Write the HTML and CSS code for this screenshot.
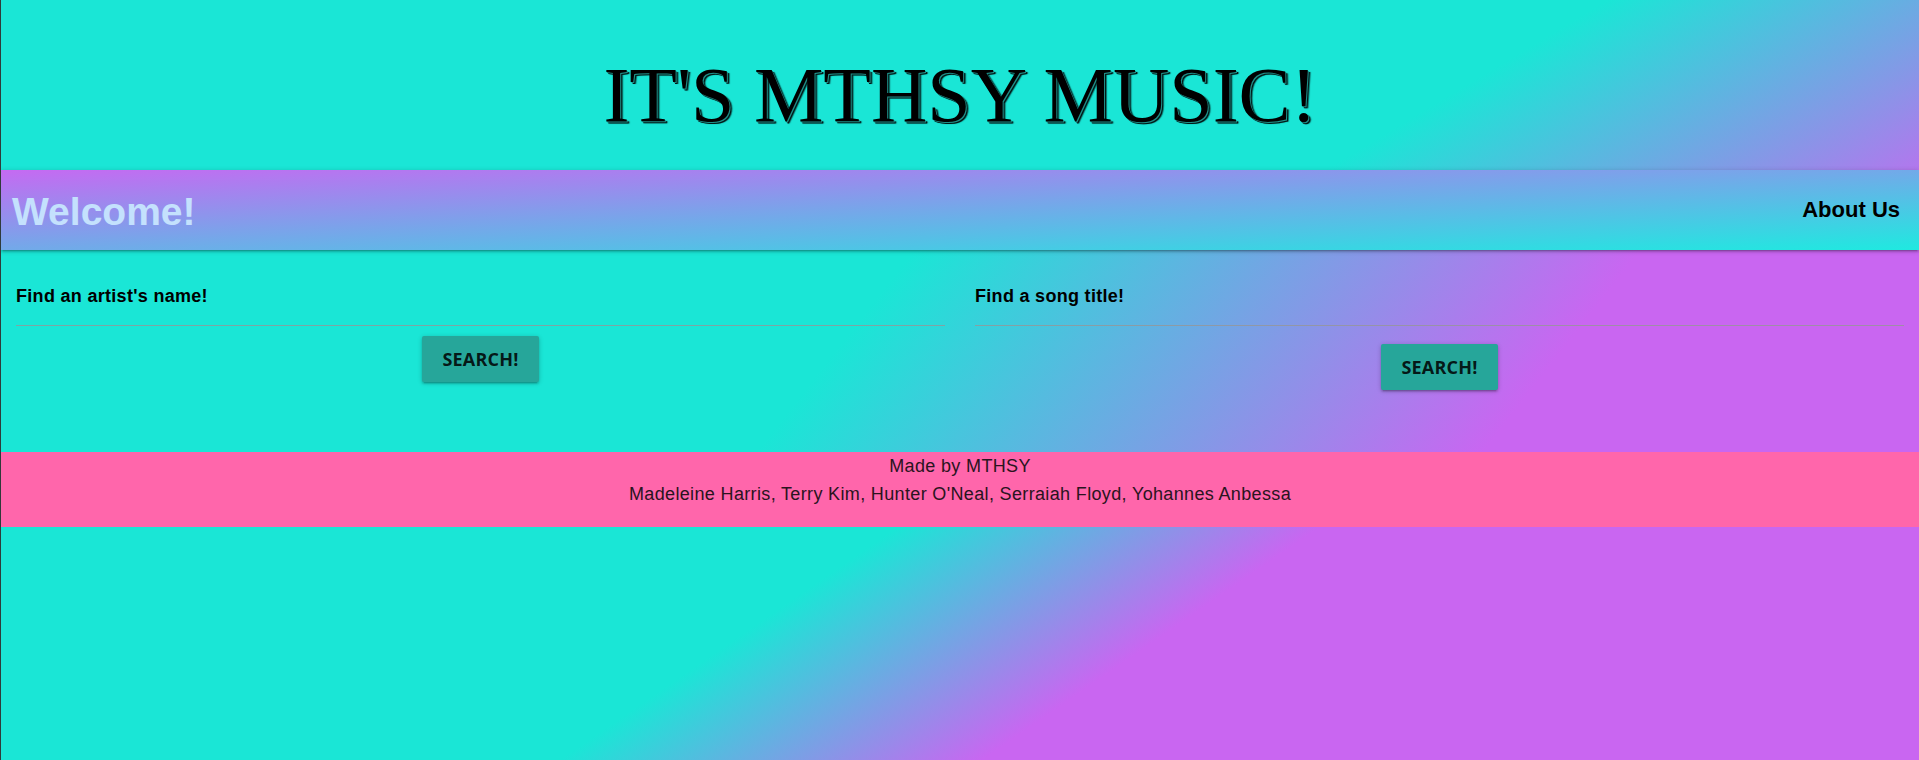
FILE: index.html
```html
<!DOCTYPE html>
<html lang="en">
<head>
  <meta charset="utf-8">
  <title>MTHSY Music</title>
  <link rel="stylesheet" href="styles.css">
</head>
<body>
  <header class="site-header">
    <h1 class="site-title">IT'S MTHSY MUSIC!</h1>
  </header>

  <nav class="navbar">
    <span class="brand">Welcome!</span>
    <a class="nav-link" href="#">About Us</a>
  </nav>

  <main class="search">
    <div class="search-col">
      <input class="search-input" type="text" placeholder="Find an artist's name!">
      <button class="btn btn--artist" type="button">SEARCH!</button>
    </div>
    <div class="search-col">
      <input class="search-input" type="text" placeholder="Find a song title!">
      <button class="btn btn--song" type="button">SEARCH!</button>
    </div>
  </main>

  <footer class="footer">
    <p class="footer-line">Made by MTHSY</p>
    <p class="footer-line">Madeleine Harris, Terry Kim, Hunter O'Neal, Serraiah Floyd, Yohannes Anbessa</p>
  </footer>
</body>
</html>
```

FILE: styles.css
```css
html {
  height: 100%;
  background: linear-gradient(145.4deg, #1ae6d6 55%, #c966f1 69%);
}

body {
  margin: 0;
  min-height: 100%;
  border-left: 1px solid #2f3b3b;
  font-family: "Liberation Sans", Arial, sans-serif;
  color: rgba(0, 0, 0, 0.87);
}

/* ---------- header ---------- */
.site-header {
  height: 170px;
  box-sizing: border-box;
  padding-top: 55px;
  text-align: center;
  background: linear-gradient(149deg, #1ae6d6 73%, #c966f1 104%);
}

.site-title {
  margin: 0;
  font-family: "Liberation Serif", "Times New Roman", serif;
  font-weight: 400;
  font-size: 78px;
  line-height: 80px;
  color: #000;
  text-shadow: 1px 1px 0 #1f8f88, 2px 2px 0 #021a18, 3px 2px 1px rgba(0, 40, 38, 0.6);
}

/* ---------- nav ---------- */
.navbar {
  position: relative;
  z-index: 1;
  height: 80px;
  display: flex;
  align-items: center;
  justify-content: space-between;
  padding: 0 19px 0 11px;
  background: linear-gradient(to bottom right, #c56af2, #1fe9e0);
  box-shadow: 0 2px 2px 0 rgba(0, 0, 0, 0.14), 0 3px 1px -2px rgba(0, 0, 0, 0.12), 0 1px 5px 0 rgba(0, 0, 0, 0.2);
}

.brand {
  font-weight: 700;
  font-size: 39px;
  line-height: 1;
  color: #c4e1fd;
  padding-top: 2px;
}

.nav-link {
  font-weight: 700;
  font-size: 22px;
  line-height: 1;
  color: #000;
  text-decoration: none;
}

/* ---------- search ---------- */
.search {
  display: grid;
  grid-template-columns: 1fr 1fr;
  align-items: start;
  padding: 36px 0 62px;
  background: linear-gradient(128deg, #1ae6d6 44%, #c966f1 79%);
}

.search-col {
  padding: 0 15px;
}

.search-input {
  display: block;
  width: 100%;
  box-sizing: border-box;
  height: 40px;
  margin: 0;
  padding: 0 0 18px;
  border: 0;
  border-bottom: 1px solid rgba(150, 150, 150, 0.8);
  background: transparent;
  font-family: "Liberation Sans", Arial, sans-serif;
  font-weight: 700;
  font-size: 18px;
  letter-spacing: 0.3px;
  line-height: 21px;
  color: #000;
  outline: none;
}

.search-input::placeholder {
  color: #000;
  opacity: 1;
}

.btn {
  display: block;
  margin: 10px auto 0;
  height: 46px;
  padding: 0 20px;
  border: 0;
  border-radius: 2px;
  background: #26a69a;
  color: rgba(0, 0, 0, 0.87);
  font-family: "Open Sans", "Liberation Sans", sans-serif;
  font-weight: 700;
  font-size: 18px;
  line-height: 46px;
  letter-spacing: 0.2px;
  box-shadow: 0 2px 2px 0 rgba(0, 0, 0, 0.14), 0 3px 1px -2px rgba(0, 0, 0, 0.12), 0 1px 5px 0 rgba(0, 0, 0, 0.2);
  cursor: pointer;
}

.btn--song {
  margin-top: 18px;
}

/* ---------- footer ---------- */
.footer {
  padding: 0 0 19px;
  background: #ff66ab;
  text-align: center;
}

.footer-line {
  margin: 0;
  font-size: 18px;
  letter-spacing: 0.35px;
  line-height: 28px;
  color: #2a1420;
}
```
